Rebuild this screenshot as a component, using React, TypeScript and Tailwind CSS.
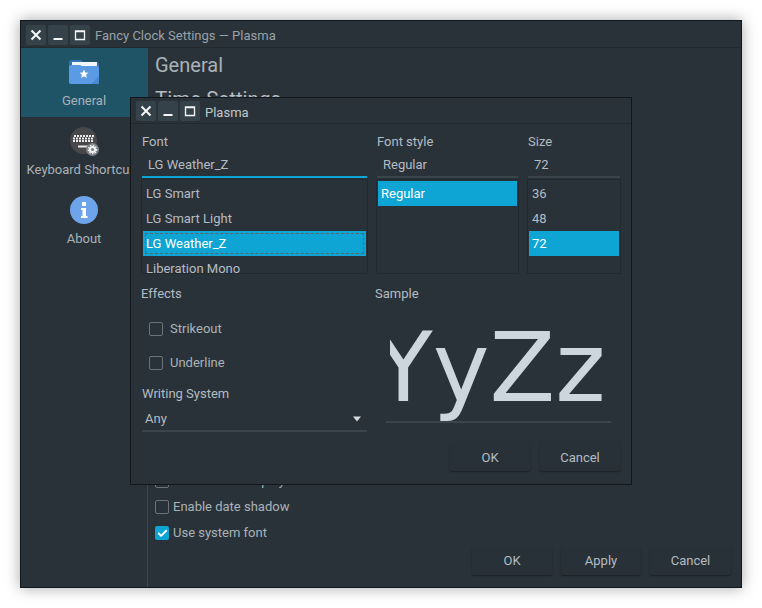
import React from "react";
import { Check } from "lucide-react";

const WindowButtons = () => (
    <div className="flex gap-[2px]">
        <div className="flex h-5 w-5 items-center justify-center rounded-[2px] bg-[#36424a]">
            <svg width="12" height="12" viewBox="0 0 12 12"><path d="M1.5 1.5 10.5 10.5M10.5 1.5 1.5 10.5" stroke="#f4f6f7" strokeWidth="2" /></svg>
        </div>
        <div className="flex h-5 w-5 items-center justify-center rounded-[2px] bg-[#36424a]">
            <svg width="12" height="12" viewBox="0 0 12 12"><path d="M1.5 10h9" stroke="#f4f6f7" strokeWidth="2" /></svg>
        </div>
        <div className="flex h-5 w-5 items-center justify-center rounded-[2px] bg-[#36424a]">
            <svg width="12" height="12" viewBox="0 0 12 12"><path d="M1.5 2h9v8.5h-9z M1.5 2.5h9" fill="none" stroke="#f4f6f7" strokeWidth="1.3" /></svg>
        </div>
    </div>
);

const Box = ({ checked }: { checked?: boolean }) =>
    checked ? (
        <div className="flex h-[14px] w-[14px] items-center justify-center rounded-[2px] bg-[#0ea5d4]">
            <Check size={11} strokeWidth={4} color="#ffffff" />
        </div>
    ) : (
        <div className="h-[14px] w-[14px] rounded-[2px] border-[1.5px] border-[#6b747a]" />
    );

const PushButton = ({ label, size }: { label: string; size: string }) => (
    <div className={`flex items-center justify-center rounded-[2px] bg-[#283138] text-[13px] text-[#b4bcc2] shadow-[0_1px_2px_rgba(0,0,0,0.35)] ${size}`}>
        {label}
    </div>
);

const ListRow = ({ label, selected, focus }: { label: string; selected?: boolean; focus?: boolean }) => (
    <div className={`flex h-[25px] shrink-0 items-center text-[13px] ${focus ? "px-[2px]" : "px-[3px]"} ${selected ? "bg-[#0ea5d4] text-white" : "text-[#b4bcc2]"}`}>
        {focus ? (
            <div className="flex h-[21px] w-full items-center border border-dashed border-[#5c6468]">{label}</div>
        ) : (
            label
        )}
    </div>
);

const FontColumn = ({ title, value, active, w, children }: { title: string; value: string; active?: boolean; w: string; children: React.ReactNode }) => (
    <div className={`flex shrink-0 flex-col ${w}`}>
        <div className="flex h-[20px] items-center text-[13px] text-[#b4bcc2]">{title}</div>
        <div className={`flex h-[26px] items-center border-b-2 pl-[6px] pt-[2px] text-[13px] text-[#b4bcc2] ${active ? "border-[#0ea5d4]" : "border-[#3a444b]"}`}>
            <span>{value}</span>
        </div>
        <div className="-mx-[1px] mt-[1px] flex h-[95px] flex-col overflow-hidden border border-[#222a30] p-[1px]">{children}</div>
    </div>
);

const SideItem = ({ label, active, labelClass, icon }: { label: string; active?: boolean; labelClass?: string; icon: React.ReactNode }) => (
    <div className={`flex h-[69px] flex-col items-center overflow-hidden pt-[8px] ${active ? "bg-[#1f5466]" : ""}`}>
        <div className="flex h-[32px] w-full items-center justify-center">{icon}</div>
        <div className={`mt-[3px] whitespace-nowrap text-[13px] text-[#a9b2b8] ${labelClass ?? ""}`}>{label}</div>
    </div>
);

const FolderIcon = () => (
    <svg width="32" height="26" viewBox="0 0 32 26">
        <path d="M4 1h9l2 2h13a3 3 0 0 1 3 3v17a2 2 0 0 1-2 2H3a2 2 0 0 1-2-2V5a3 3 0 0 1 3-4z" fill="#2f72b8" />
        <rect x="4" y="3" width="25" height="5" fill="#f2f6fa" />
        <path d="M1 8q0-2 3-2h8l2 1h15q2 0 2 2v14a2 2 0 0 1-2 2H3a2 2 0 0 1-2-2z" fill="#5b9be6" />
        <path d="M31 17v6a2 2 0 0 1-2 2h-6z" fill="#4c89d3" />
        <path d="m16 10.5 1.3 2.9 3.1.3-2.3 2.1.7 3.1-2.8-1.6-2.8 1.6.7-3.1-2.3-2.1 3.1-.3z" fill="#ffffff" />
    </svg>
);

const KeyboardIcon = () => (
    <svg width="32" height="32" viewBox="0 0 32 32">
        <circle cx="15.5" cy="15.5" r="13.5" fill="#48484a" />
        <path d="M6 11h20M5 13.5h21M5 16h21" stroke="#e8e8e8" strokeWidth="2" strokeDasharray="2 1" />
        <path d="M10 21.5h13" stroke="#e8e8e8" strokeWidth="2" />
        <circle cx="24.5" cy="24.5" r="6.5" fill="#7d8286" />
        <circle cx="24.5" cy="24.5" r="2.6" fill="none" stroke="#f2f2f2" strokeWidth="2" />
        <circle cx="24.5" cy="24.5" r="4.2" fill="none" stroke="#f2f2f2" strokeWidth="1.2" strokeDasharray="1.4 1.4" />
    </svg>
);

const InfoIcon = () => (
    <svg width="28" height="28" viewBox="0 0 28 28">
        <circle cx="14" cy="14" r="14" fill="#6ea4ea" />
        <rect x="12" y="6" width="4" height="4" fill="#ffffff" />
        <path d="M11 12h5v8h1.5v2h-6.5v-2h1.5v-6H11z" fill="#ffffff" />
    </svg>
);

export default function App() {
    return (
        <div className="relative h-[608px] w-[762px] bg-white p-[20px] font-['Roboto',sans-serif]">
            <div className="flex h-[568px] w-[722px] flex-col border border-[#12171b] bg-[#2a3239] shadow-[0_0_14px_rgba(0,0,0,0.35)]">
                <div className="flex h-[27px] shrink-0 items-center gap-[5px] border-b border-[#222a30] pl-[5px] pt-[1px] text-[13px] text-[#98a1a8]">
                    <WindowButtons />
                    <span className="mt-[2px]">Fancy Clock Settings — Plasma</span>
                </div>
                <div className="flex min-h-0 flex-1">
                    <div className="flex w-[127px] shrink-0 flex-col border-r border-[#3d474e]">
                        <SideItem label="General" active icon={<FolderIcon />} />
                        <SideItem label="Keyboard Shortcu" labelClass="mr-[12px]" icon={<KeyboardIcon />} />
                        <SideItem label="About" icon={<InfoIcon />} />
                    </div>
                    <div className="flex min-w-0 flex-1 flex-col pl-[7px] pr-[10px]">
                        <div className="mt-[5px] text-[20px] leading-[24px] text-[#a9b2b8]">General</div>
                        <div className="mt-[9px] text-[20.5px] leading-[26px] text-[#b4bcc2]">Time Settings</div>
                        <div className="flex-1" />
                        <div className="flex flex-col text-[13px] text-[#a9b2b8]">
                            <div className="flex h-[26px] items-center gap-[4px]"><Box /><span>Enable date display</span></div>
                            <div className="flex h-[26px] items-center gap-[4px]"><Box /><span>Enable date shadow</span></div>
                            <div className="flex h-[26px] items-center gap-[4px]"><Box checked /><span>Use system font</span></div>
                        </div>
                        <div className="mb-[12px] mt-[1px] flex justify-end gap-[9px]">
                            <PushButton label="OK" size="h-[28px] w-[80px]" />
                            <PushButton label="Apply" size="h-[28px] w-[80px]" />
                            <PushButton label="Cancel" size="h-[28px] w-[81px]" />
                        </div>
                    </div>
                </div>
            </div>

            <div className="absolute left-[130px] top-[97px] flex h-[388px] w-[502px] flex-col border border-[#12171b] bg-[#2a3239]">
                <div className="flex h-[26px] shrink-0 items-center gap-[5px] border-b border-[#222a30] pl-[5px] pt-[1px] text-[13px] text-[#c0c7cc]">
                    <WindowButtons />
                    <span className="mt-[4px]">Plasma</span>
                </div>
                <div className="flex gap-[9px] pl-[11px] pt-[8px]">
                    <FontColumn title="Font" value="LG Weather_Z" active w="w-[225px] mr-[1px]">
                        <ListRow label="LG Smart" />
                        <ListRow label="LG Smart Light" />
                        <ListRow label="LG Weather_Z" selected focus />
                        <ListRow label="Liberation Mono" />
                    </FontColumn>
                    <FontColumn title="Font style" value="Regular" w="w-[141px] mr-[1px]">
                        <ListRow label="Regular" selected />
                    </FontColumn>
                    <FontColumn title="Size" value="72" w="w-[92px]">
                        <ListRow label="36" />
                        <ListRow label="48" />
                        <ListRow label="72" selected />
                    </FontColumn>
                </div>
                <div className="flex pl-[10px]">
                    <div className="flex w-[234px] shrink-0 flex-col">
                        <div className="mt-[10px] flex h-[20px] items-center text-[13px] text-[#b4bcc2]">Effects</div>
                        <div className="mt-[13px] flex flex-col gap-[10px] pl-[8px] text-[13px] text-[#a9b2b8]">
                            <div className="flex h-[24px] items-center gap-[7px]"><Box /><span>Strikeout</span></div>
                            <div className="flex h-[24px] items-center gap-[7px]"><Box /><span>Underline</span></div>
                        </div>
                        <div className="ml-[1px] mt-[9px] flex h-[20px] items-center text-[13px] text-[#b4bcc2]">Writing System</div>
                        <div className="ml-[1px] mt-[3px] flex h-[25px] w-[225px] items-center justify-between border-b-2 border-[#3a444b] pl-[3px] pr-[5px] text-[13px] text-[#b4bcc2]">
                            <span>Any</span>
                            <svg width="10" height="6" viewBox="0 0 10 6"><path d="M1 .5h8L5 5.5z" fill="#d4dade" /></svg>
                        </div>
                    </div>
                    <div className="flex min-w-0 flex-1 flex-col">
                        <div className="mt-[10px] flex h-[20px] items-center text-[13px] text-[#b4bcc2]">Sample</div>
                        <div className="ml-[11px] mt-[10px] w-[225px] border-b-2 border-[#3a444b] pl-[4px]">
                            <div className="h-[107px] overflow-hidden whitespace-nowrap font-['DejaVu_Sans',sans-serif] text-[96px] leading-[108px] text-[#cdd6dc]">
                                <div className="-ml-[16px]">YyZz</div>
                            </div>
                        </div>
                    </div>
                </div>
                <div className="mr-[11px] mt-[10px] flex justify-end gap-[10px]">
                    <PushButton label="OK" size="h-[29px] w-[80px] pt-[2px]" />
                    <PushButton label="Cancel" size="h-[29px] w-[80px] pt-[2px]" />
                </div>
            </div>
        </div>
    );
}
